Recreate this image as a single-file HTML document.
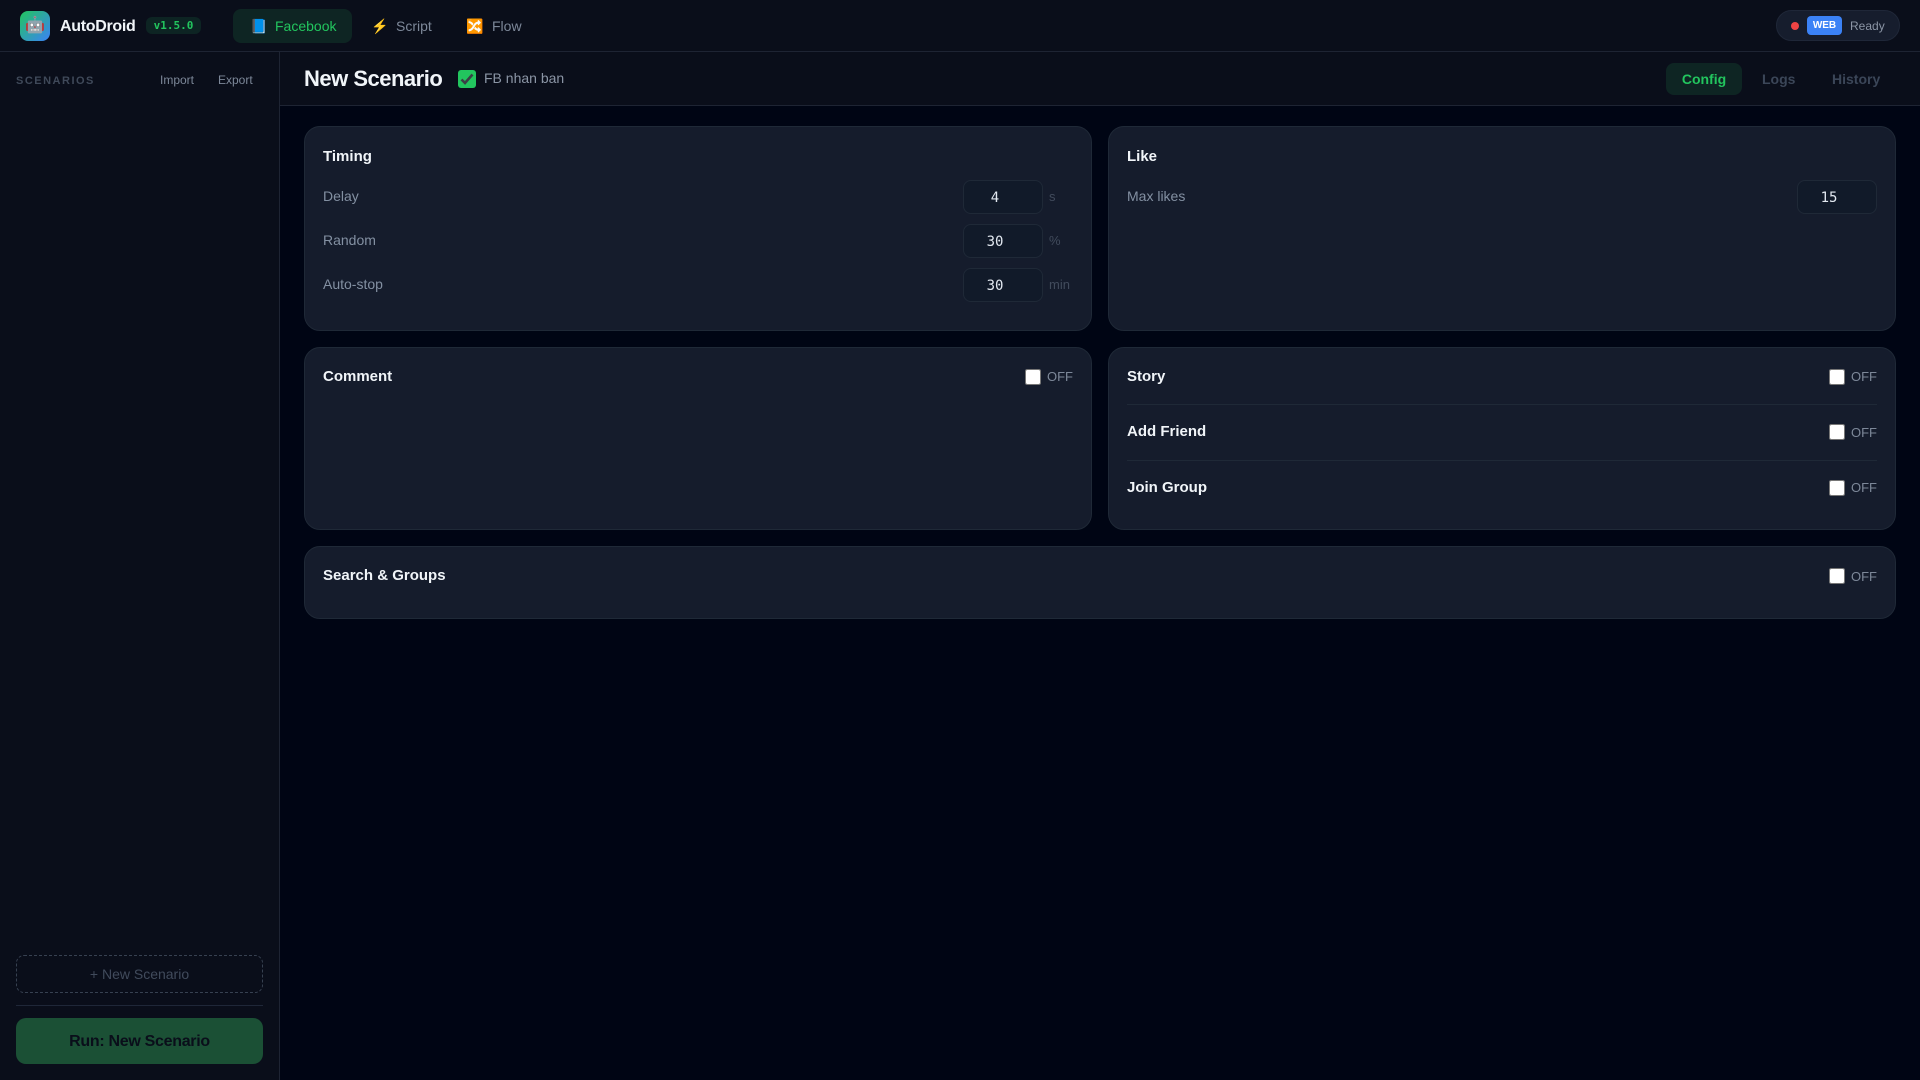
<!DOCTYPE html>
<html><head><meta charset="utf-8"><style>
*{box-sizing:border-box}
html,body{margin:0;width:1920px;height:1080px;overflow:hidden;background:#000514;font-family:"Liberation Sans",sans-serif}
.a{position:absolute;white-space:nowrap}
.card{position:absolute;background:#151c2c;border:1px solid #1f2937;border-radius:16px}
.t{position:absolute;font-size:15px;font-weight:700;color:#f1f5f9;line-height:18px;white-space:nowrap}
.l{position:absolute;font-size:14px;color:#8390a2;line-height:18px;white-space:nowrap}
.i{position:absolute;width:80px;height:34px;background:#111a29;border:1px solid #1f2937;border-radius:8px;font:14px/32px "DejaVu Sans Mono",monospace;color:#e2e8f0;padding-right:16px;padding-top:1px;text-align:center}
.u{position:absolute;font-size:13px;color:#414b5c;line-height:16px}
.cb{position:absolute;width:16px;height:16px;margin:0}
.off{position:absolute;font-size:13px;color:#7d8899;line-height:16px}
.d{position:absolute;height:1px;background:#1f2937}
</style></head><body>
<div class="a" style="left:0;top:0;width:1920px;height:52px;background:#0a0e1a;border-bottom:1px solid #1e2433"></div>
<div class="a" style="left:20px;top:11px;width:30px;height:30px;border-radius:8px;background:linear-gradient(135deg,#22c55e,#3b82f6);font-size:16px;line-height:30px;text-align:center">🤖</div>
<div class="a" style="left:60px;top:17px;font-size:16px;font-weight:700;color:#f1f5f9;line-height:20px;letter-spacing:-.3px">AutoDroid</div>
<div class="a" style="left:146px;top:17px;width:55px;height:17px;border-radius:6px;background:#0d2423;color:#22c55e;font:700 11px/17px 'DejaVu Sans Mono',monospace;text-align:center">v1.5.0</div>
<div class="a" style="left:233px;top:9px;width:119px;height:34px;border-radius:8px;background:#0e2523"></div>
<div class="a" style="left:250px;top:17px;font-size:14px;line-height:18px">📘</div>
<div class="a" style="left:275px;top:17px;font-size:14px;line-height:18px;color:#22c55e">Facebook</div>
<div class="a" style="left:371px;top:17px;font-size:14px;line-height:18px">⚡</div>
<div class="a" style="left:396px;top:17px;font-size:14px;line-height:18px;color:#7d8899">Script</div>
<div class="a" style="left:466px;top:17px;font-size:14px;line-height:18px">🔀</div>
<div class="a" style="left:492px;top:17px;font-size:14px;line-height:18px;color:#7d8899">Flow</div>
<div class="a" style="left:1776px;top:10px;width:124px;height:31px;border-radius:16px;background:#161d2d;border:1px solid #1f2738"></div>
<div class="a" style="left:1791px;top:22px;width:8px;height:8px;border-radius:50%;background:#ef4444"></div>
<div class="a" style="left:1807px;top:16px;width:35px;height:19px;border-radius:4px;background:#3b82f6;color:#fff;font-size:10px;font-weight:700;line-height:19px;text-align:center">WEB</div>
<div class="a" style="left:1850px;top:18px;font-size:12px;line-height:16px;color:#8b95a5">Ready</div>

<div class="a" style="left:0;top:52px;width:280px;height:1028px;background:#0a0e1a;border-right:1px solid #1e2433"></div>
<div class="a" style="left:16px;top:74px;font-size:11px;font-weight:700;letter-spacing:1.5px;color:#3f4959;line-height:14px">SCENARIOS</div>
<div class="a" style="left:160px;top:72px;font-size:12px;line-height:16px;color:#7d8899">Import</div>
<div class="a" style="left:218px;top:72px;font-size:12px;line-height:16px;color:#7d8899">Export</div>
<div class="a" style="left:16px;top:955px;width:247px;height:38px;border:1px dashed #374151;border-radius:8px;color:#414b5c;font-size:14px;line-height:36px;text-align:center">+ New Scenario</div>
<div class="a" style="left:16px;top:1005px;width:247px;height:1px;background:#1f2738"></div>
<div class="a" style="left:16px;top:1018px;width:247px;height:46px;border-radius:10px;background:#1b5035;color:#0a0e1a;font-size:16px;font-weight:700;line-height:47px;text-align:center;letter-spacing:-.3px">Run: New Scenario</div>

<div class="a" style="left:280px;top:52px;width:1640px;height:54px;background:#0a0e1a;border-bottom:1px solid #1e2433"></div>
<div class="a" style="left:304px;top:65px;font-size:22px;font-weight:700;color:#f1f5f9;line-height:28px;letter-spacing:-.5px">New Scenario</div>
<div class="a" style="left:458px;top:70px;width:18px;height:18px;border-radius:3px;background:#22c55e"><svg width="18" height="18" viewBox="0 0 18 18" style="display:block"><path d="M3.5 9.5L7 13L14.5 4.5" fill="none" stroke="#3a4046" stroke-width="2.6"/></svg></div>
<div class="a" style="left:484px;top:69px;font-size:14px;line-height:18px;color:#8b95a5">FB nhan ban</div>
<div class="a" style="left:1666px;top:63px;width:76px;height:32px;border-radius:8px;background:#0e2523;color:#22c55e;font-size:14px;font-weight:700;line-height:32px;text-align:center">Config</div>
<div class="a" style="left:1762px;top:71px;font-size:14px;font-weight:700;line-height:16px;color:#3b4658">Logs</div>
<div class="a" style="left:1832px;top:71px;font-size:14px;font-weight:700;line-height:16px;color:#3b4658">History</div>

<div class="card" style="left:304px;top:126px;width:788px;height:205px"></div>
<div class="t" style="left:323px;top:148px">Timing</div>
<div class="l" style="left:323px;top:187px">Delay</div>
<div class="i" style="left:963px;top:180px">4</div><div class="u" style="left:1049px;top:189px">s</div>
<div class="l" style="left:323px;top:231px">Random</div>
<div class="i" style="left:963px;top:224px">30</div><div class="u" style="left:1049px;top:233px">%</div>
<div class="l" style="left:323px;top:275px">Auto-stop</div>
<div class="i" style="left:963px;top:268px">30</div><div class="u" style="left:1049px;top:277px">min</div>

<div class="card" style="left:1108px;top:126px;width:788px;height:205px"></div>
<div class="t" style="left:1127px;top:148px">Like</div>
<div class="l" style="left:1127px;top:187px">Max likes</div>
<div class="i" style="left:1797px;top:180px">15</div>

<div class="card" style="left:304px;top:347px;width:788px;height:183px"></div>
<div class="t" style="left:323px;top:368px">Comment</div>
<input type="checkbox" class="cb" style="left:1025px;top:369px"><div class="off" style="left:1047px;top:369px">OFF</div>

<div class="card" style="left:1108px;top:347px;width:788px;height:183px"></div>
<div class="t" style="left:1127px;top:368px">Story</div>
<input type="checkbox" class="cb" style="left:1829px;top:369px"><div class="off" style="left:1851px;top:369px">OFF</div>
<div class="d" style="left:1127px;top:404px;width:750px"></div>
<div class="t" style="left:1127px;top:423px">Add Friend</div>
<input type="checkbox" class="cb" style="left:1829px;top:424px"><div class="off" style="left:1851px;top:425px">OFF</div>
<div class="d" style="left:1127px;top:460px;width:750px"></div>
<div class="t" style="left:1127px;top:479px">Join Group</div>
<input type="checkbox" class="cb" style="left:1829px;top:480px"><div class="off" style="left:1851px;top:480px">OFF</div>

<div class="card" style="left:304px;top:546px;width:1592px;height:73px"></div>
<div class="t" style="left:323px;top:567px">Search &amp; Groups</div>
<input type="checkbox" class="cb" style="left:1829px;top:568px"><div class="off" style="left:1851px;top:569px">OFF</div>
</body></html>
